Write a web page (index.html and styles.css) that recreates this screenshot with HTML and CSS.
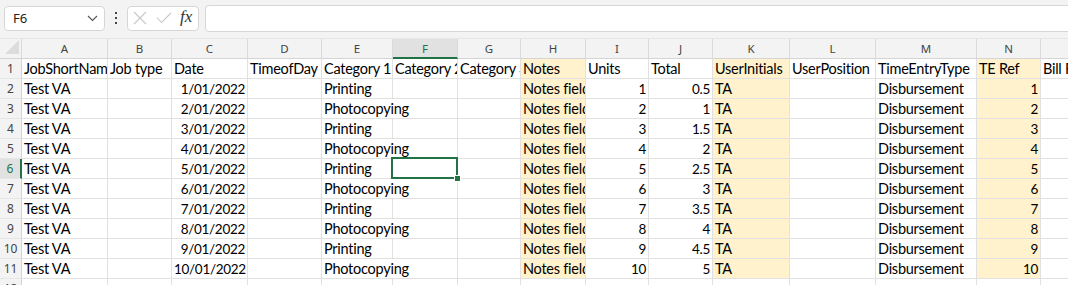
FILE: index.html
```html
<!DOCTYPE html>
<html lang="en">
<head>
<meta charset="UTF-8">
<meta name="viewport" content="width=device-width, initial-scale=1.0">
<title>Time Entries - Excel</title>
<link rel="stylesheet" href="styles.css">
</head>
<body>

<div class="toolbar">
    <div class="namebox">
        <span>F6</span>
        <svg class="chev" width="11" height="7" viewBox="0 0 11 7"><path d="M1 1 L5.5 5.5 L10 1" fill="none" stroke="#555" stroke-width="1.1"/></svg>
    </div>
    <svg class="dots" width="4" height="12" viewBox="0 0 4 12"><rect x="1" y="0" width="2" height="2" fill="#444"/><rect x="1" y="5" width="2" height="2" fill="#444"/><rect x="1" y="10" width="2" height="2" fill="#444"/></svg>
    <div class="fxbox">
        <svg width="14" height="14" viewBox="0 0 14 14"><path d="M1 1 L13 13 M13 1 L1 13" stroke="#c8c8c8" stroke-width="1.1" fill="none"/></svg>
        <svg width="16" height="12" viewBox="0 0 16 12"><path d="M1 5.5 L5.5 10.5 L15 1" stroke="#c8c8c8" stroke-width="1.1" fill="none"/></svg>
        <span class="fx">fx</span>
    </div>
    <div class="formula"></div>
</div>

<div class="sheet">
    <div class="row head">
        <div class="corner"></div>
        <div class="ch">A</div><div class="ch">B</div><div class="ch">C</div><div class="ch">D</div>
        <div class="ch">E</div><div class="ch sel">F</div><div class="ch">G</div><div class="ch">H</div>
        <div class="ch">I</div><div class="ch">J</div><div class="ch">K</div><div class="ch">L</div>
        <div class="ch">M</div><div class="ch">N</div><div class="ch">O</div>
    </div>

    <div class="row">
        <div class="rh">1</div>
        <div class="c">JobShortName</div><div class="c">Job type</div><div class="c">Date</div><div class="c">TimeofDay</div>
        <div class="c">Category 1</div><div class="c">Category 2</div><div class="c">Category 3</div><div class="c note">Notes</div>
        <div class="c">Units</div><div class="c">Total</div><div class="c note">UserInitials</div><div class="c">UserPosition</div>
        <div class="c">TimeEntryType</div><div class="c note">TE Ref</div><div class="c">Bill Rate</div>
    </div>

    <div class="row">
        <div class="rh">2</div>
        <div class="c">Test VA</div><div class="c"></div><div class="c num">1/01/2022</div><div class="c"></div>
        <div class="c">Printing</div><div class="c"></div><div class="c"></div><div class="c note">Notes field</div>
        <div class="c num">1</div><div class="c num">0.5</div><div class="c note">TA</div><div class="c"></div>
        <div class="c">Disbursement</div><div class="c note num">1</div><div class="c"></div>
    </div>

    <div class="row">
        <div class="rh">3</div>
        <div class="c">Test VA</div><div class="c"></div><div class="c num">2/01/2022</div><div class="c"></div>
        <div class="c wide">Photocopying</div><div class="c"></div><div class="c note">Notes field</div>
        <div class="c num">2</div><div class="c num">1</div><div class="c note">TA</div><div class="c"></div>
        <div class="c">Disbursement</div><div class="c note num">2</div><div class="c"></div>
    </div>

    <div class="row">
        <div class="rh">4</div>
        <div class="c">Test VA</div><div class="c"></div><div class="c num">3/01/2022</div><div class="c"></div>
        <div class="c">Printing</div><div class="c"></div><div class="c"></div><div class="c note">Notes field</div>
        <div class="c num">3</div><div class="c num">1.5</div><div class="c note">TA</div><div class="c"></div>
        <div class="c">Disbursement</div><div class="c note num">3</div><div class="c"></div>
    </div>

    <div class="row">
        <div class="rh">5</div>
        <div class="c">Test VA</div><div class="c"></div><div class="c num">4/01/2022</div><div class="c"></div>
        <div class="c wide">Photocopying</div><div class="c"></div><div class="c note">Notes field</div>
        <div class="c num">4</div><div class="c num">2</div><div class="c note">TA</div><div class="c"></div>
        <div class="c">Disbursement</div><div class="c note num">4</div><div class="c"></div>
    </div>

    <div class="row">
        <div class="rh sel">6</div>
        <div class="c">Test VA</div><div class="c"></div><div class="c num">5/01/2022</div><div class="c"></div>
        <div class="c">Printing</div><div class="c active"></div><div class="c"></div><div class="c note">Notes field</div>
        <div class="c num">5</div><div class="c num">2.5</div><div class="c note">TA</div><div class="c"></div>
        <div class="c">Disbursement</div><div class="c note num">5</div><div class="c"></div>
    </div>

    <div class="row">
        <div class="rh">7</div>
        <div class="c">Test VA</div><div class="c"></div><div class="c num">6/01/2022</div><div class="c"></div>
        <div class="c wide">Photocopying</div><div class="c"></div><div class="c note">Notes field</div>
        <div class="c num">6</div><div class="c num">3</div><div class="c note">TA</div><div class="c"></div>
        <div class="c">Disbursement</div><div class="c note num">6</div><div class="c"></div>
    </div>

    <div class="row">
        <div class="rh">8</div>
        <div class="c">Test VA</div><div class="c"></div><div class="c num">7/01/2022</div><div class="c"></div>
        <div class="c">Printing</div><div class="c"></div><div class="c"></div><div class="c note">Notes field</div>
        <div class="c num">7</div><div class="c num">3.5</div><div class="c note">TA</div><div class="c"></div>
        <div class="c">Disbursement</div><div class="c note num">7</div><div class="c"></div>
    </div>

    <div class="row">
        <div class="rh">9</div>
        <div class="c">Test VA</div><div class="c"></div><div class="c num">8/01/2022</div><div class="c"></div>
        <div class="c wide">Photocopying</div><div class="c"></div><div class="c note">Notes field</div>
        <div class="c num">8</div><div class="c num">4</div><div class="c note">TA</div><div class="c"></div>
        <div class="c">Disbursement</div><div class="c note num">8</div><div class="c"></div>
    </div>

    <div class="row">
        <div class="rh">10</div>
        <div class="c">Test VA</div><div class="c"></div><div class="c num">9/01/2022</div><div class="c"></div>
        <div class="c">Printing</div><div class="c"></div><div class="c"></div><div class="c note">Notes field</div>
        <div class="c num">9</div><div class="c num">4.5</div><div class="c note">TA</div><div class="c"></div>
        <div class="c">Disbursement</div><div class="c note num">9</div><div class="c"></div>
    </div>

    <div class="row">
        <div class="rh">11</div>
        <div class="c">Test VA</div><div class="c"></div><div class="c num">10/01/2022</div><div class="c"></div>
        <div class="c wide">Photocopying</div><div class="c"></div><div class="c note">Notes field</div>
        <div class="c num">10</div><div class="c num">5</div><div class="c note">TA</div><div class="c"></div>
        <div class="c">Disbursement</div><div class="c note num">10</div><div class="c"></div>
    </div>

    <div class="row">
        <div class="rh">12</div>
        <div class="c"></div><div class="c"></div><div class="c"></div><div class="c"></div>
        <div class="c"></div><div class="c"></div><div class="c"></div><div class="c"></div>
        <div class="c"></div><div class="c"></div><div class="c"></div><div class="c"></div>
        <div class="c"></div><div class="c"></div><div class="c"></div>
    </div>
</div>

</body>
</html>
```

FILE: styles.css
```css
body {
    margin: 0;
    padding: 0;
    background-color: #fff;
    font-family: Lato, "Liberation Sans", sans-serif;
    overflow: hidden;
    width: 1068px;
    height: 285px;
}

/* formula bar */
.toolbar {
    display: flex;
    align-items: center;
    height: 39px;
    padding: 6px 0 8px 4px;
    background-color: #f3f3f3;
    border-bottom: 1px solid #e6e6e6;
    box-sizing: border-box;
}

.namebox {
    display: flex;
    align-items: center;
    justify-content: space-between;
    width: 101px;
    height: 25px;
    box-sizing: border-box;
    padding: 0 6px 0 8px;
    background-color: #fff;
    border: 1px solid #d6d6d6;
    border-radius: 4px;
    font-family: "Noto Sans", sans-serif;
    font-size: 13px;
    color: #222;
}

.dots {
    margin: 0 9px;
}

.fxbox {
    display: flex;
    align-items: center;
    gap: 9px;
    width: 72px;
    height: 25px;
    box-sizing: border-box;
    padding: 0 4px 0 5px;
    background-color: #fff;
    border: 1px solid #d6d6d6;
    border-radius: 4px;
}

.fx {
    font-family: "Liberation Serif", serif;
    font-style: italic;
    font-size: 17px;
    color: #333;
    margin-left: -1px;
    margin-top: -2px;
}

.formula {
    flex: 1;
    height: 25px;
    margin-left: 6px;
    margin-right: -10px;
    background-color: #fff;
    border: 1px solid #d6d6d6;
    border-radius: 4px;
}

/* grid */
.row {
    display: grid;
    grid-template-columns: 22px 86px 64px 76px 74px 71px 65px 63px 65px 63px 64px 77px 86px 101px 64px 80px;
    height: 20px;
}

.row > div {
    box-sizing: border-box;
    height: 20px;
    border-right: 1px solid #e1e1e1;
    border-bottom: 1px solid #e1e1e1;
}

.head {
    background-color: #f3f3f3;
}

.head > div {
    border-right: 1px solid #dadada;
    border-bottom: 1px solid #d4d4d4;
}

.corner {
    position: relative;
}

.corner::after {
    content: "";
    position: absolute;
    left: 5px;
    top: 1px;
    width: 14px;
    height: 14px;
    background-color: #dcdcdc;
    clip-path: polygon(100% 0, 100% 100%, 0 100%);
}

.ch {
    font-family: "Noto Sans", sans-serif;
    font-size: 11.5px;
    color: #444;
    text-align: center;
    line-height: 19px;
}

.ch.sel {
    background-color: #e1e1e1;
    color: #217346;
    border-bottom: 2px solid #217346 !important;
}

.rh {
    background-color: #f3f3f3;
    border-right: 1px solid #d4d4d4 !important;
    border-bottom-color: #e6e6e6 !important;
    font-family: "Noto Sans", sans-serif;
    font-size: 12px;
    color: #444;
    text-align: center;
    line-height: 20px;
}

.rh.sel {
    background-color: #e1e1e1;
    color: #217346;
    border-right: 2px solid #217346 !important;
}

.c {
    padding: 0 2px;
    font-size: 14.5px;
    letter-spacing: -0.25px;
    line-height: 20px;
    color: #000;
    white-space: nowrap;
    overflow: hidden;
}

.c.wide {
    grid-column: span 2;
    overflow: visible;
}

.c.num {
    text-align: right;
    font-size: 13.5px;
    letter-spacing: -0.3px;
    padding-right: 2px;
}

.c.note {
    background-color: #fff2cc;
}

.c.active {
    position: relative;
    overflow: visible;
}

.c.active::after {
    content: "";
    position: absolute;
    left: -2px;
    top: -2px;
    right: -1px;
    bottom: -1px;
    border: 2px solid #217346;
}

.c.active::before {
    content: "";
    position: absolute;
    right: -4px;
    bottom: -4px;
    width: 5px;
    height: 5px;
    background-color: #217346;
    border: 1px solid #fff;
    z-index: 1;
}
```
